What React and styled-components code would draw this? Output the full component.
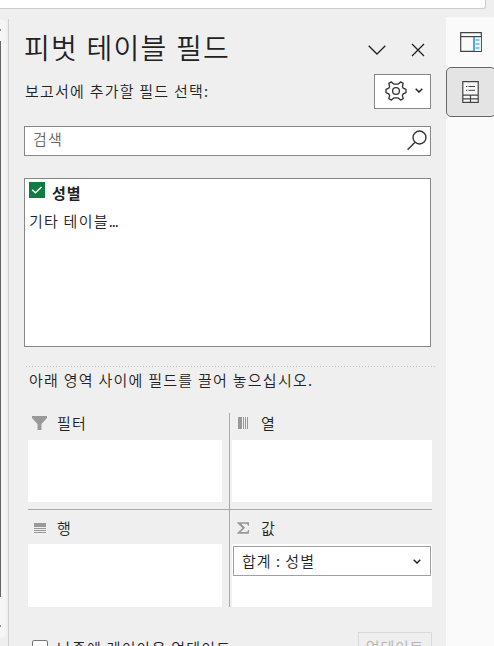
import { useState } from "react";
import styled, { createGlobalStyle } from "styled-components";

const GlobalStyle = createGlobalStyle`
  * {
    box-sizing: border-box;
  }
  body {
    margin: 0;
    overflow: hidden;
    background: #efefef;
    color: #222222;
    font-family: "Noto Sans CJK KR", "Noto Sans", sans-serif;
    font-size: 15px;
    font-weight: 350;
    letter-spacing: 1.22px;
  }
  svg {
    display: block;
    flex: none;
  }
`;

const ChevronIcon = ({ width, height, stroke = 1.3 }) => (
  <svg width={width} height={height} fill="none" stroke="#222">
    <path
      d={`M.7 .8L${width / 2} ${height - 1}L${width - 0.7} .8`}
      strokeWidth={stroke}
    />
  </svg>
);

const CloseIcon = () => (
  <svg width="14" height="14" fill="none" stroke="#222" strokeWidth="1.3">
    <path d="M1 1L13 13M13 1L1 13" />
  </svg>
);

const GearIcon = () => (
  <svg width="22" height="20" fill="none" stroke="#333" strokeWidth="1.3">
    <path
      d="M6.4 .9L8.8 3.1H13.2L15.6 .9L18.2 2.4L17.4 5.6L18.2 7.1L21 8.3V11.7L18.2 12.9L17.4 14.4L18.2 17.6L15.6 19.1L13.2 16.9H8.8L6.4 19.1L3.8 17.6L4.6 14.4L3.8 12.9L1 11.7V8.3L3.8 7.1L4.6 5.6L3.8 2.4Z"
      strokeLinejoin="round"
    />
    <circle cx="11" cy="10" r="3.4" />
  </svg>
);

const SearchIcon = () => (
  <svg width="20" height="21" fill="none" stroke="#333" strokeWidth="1.4">
    <circle cx="12.5" cy="7.5" r="6.5" />
    <path d="M8 12.2L.6 19.8" />
  </svg>
);

const FilterIcon = () => (
  <svg width="15" height="15" fill="#999">
    <path d="M0 0H15V2L9.5 8V14H5.5V8L0 2Z" />
  </svg>
);

const ColumnsIcon = () => (
  <svg width="11" height="12" fill="#999" shapeRendering="crispEdges">
    <path d="M0 0h4v12H0zM5 0h1v12H5zM7 0h1v12H7zM9 0h1v12H9z" />
  </svg>
);

const RowsIcon = () => (
  <svg width="12" height="10" fill="#999" shapeRendering="crispEdges">
    <path d="M0 0h12v4H0zM0 5h12v1H0zM0 7h12v1H0zM0 9h12v1H0z" />
  </svg>
);

const SigmaIcon = () => (
  <svg width="13" height="12" fill="#999">
    <path d="M.3 .3H12V3.8H11.2Q10.8 1.8 8.5 1.7H4.2L8.1 5.7L3.7 10H8.8Q11 9.9 11.4 7.9H12.2L11.8 11.7H.3V11L5.4 6.1L.3 1Z" />
  </svg>
);

const FieldPaneIcon = () => (
  <svg width="22" height="20" fill="none" stroke="#444" strokeWidth="1.2">
    <path d="M.7 .7H21.3V19.3H.7Z" fill="#fafafa" />
    <path d="M14 5h7v14h-7z" fill="#eaf5fc" stroke="none" />
    <path d="M.7 4.6H21.3" />
    <path d="M14 5V19" stroke="#2a95d5" strokeWidth="1.6" />
    <path d="M15.5 8H19.5M15.5 12H19.5M15.5 16H19.5" stroke="#2a95d5" />
  </svg>
);

const PivotPaneIcon = () => (
  <svg width="17" height="22" fill="none" stroke="#444" strokeWidth="1.2">
    <path d="M.8 .7H16.2V21.3H.8Z" fill="#fafafa" />
    <path d="M4 5.5H5.3M6.5 5.5H13M4 9.3H5.3M6.5 9.3H13" strokeWidth="1" />
    <path d="M.8 14.2H16.2M.8 17.8H16.2M8.5 14.2V21.3" />
  </svg>
);

const AREAS = [
  { id: "filters", label: "필터", Icon: FilterIcon },
  { id: "columns", label: "열", Icon: ColumnsIcon },
  { id: "rows", label: "행", Icon: RowsIcon },
  { id: "values", label: "값", Icon: SigmaIcon, items: ["합계 : 성별"] },
];

const App = () => {
  const [checked, setChecked] = useState(true);
  const [search, setSearch] = useState("");

  return (
    <>
      <GlobalStyle />
      <Screen>
        <SheetEdge />
        <Body>
          <Gutter>
            <ScrollTrack>
              <ScrollTip />
              <ScrollThumb />
              <ScrollTip />
            </ScrollTrack>
          </Gutter>
          <Pane>
            <Header>
              <Title>피벗 테이블 필드</Title>
              <HeaderActions>
                <ChevronIcon width={18} height={10} />
                <CloseIcon />
              </HeaderActions>
            </Header>
            <Toolbar>
              <ToolbarLabel>보고서에 추가할 필드 선택:</ToolbarLabel>
              <SettingsButton>
                <GearIcon />
                <ChevronIcon width={8} height={5} stroke={1.5} />
              </SettingsButton>
            </Toolbar>
            <SearchBox>
              <SearchInput
                placeholder="검색"
                value={search}
                onChange={(event) => setSearch(event.target.value)}
              />
              <SearchIcon />
            </SearchBox>
            <FieldList>
              <Field onClick={() => setChecked(!checked)}>
                <CheckMark $checked={checked}>
                  <svg width="16" height="16" fill="none" stroke="#fff">
                    <path d="M3.2 7.8L6.4 10.7L12.5 5" strokeWidth="1.5" />
                  </svg>
                </CheckMark>
                <FieldName>성별</FieldName>
              </Field>
              <MoreTables>
                기타 테이블<Dots>...</Dots>
              </MoreTables>
            </FieldList>
            <Divider />
            <Hint>아래 영역 사이에 필드를 끌어 놓으십시오.</Hint>
            <Areas>
              {AREAS.map(({ id, label, Icon, items = [] }, i) => (
                <Area key={id} $right={i % 2 === 1} $bottom={i > 1}>
                  <AreaLabel $bottom={i > 1}>
                    <IconSlot>
                      <Icon />
                    </IconSlot>
                    {label}
                  </AreaLabel>
                  <DropZone $bottom={i > 1}>
                    {items.map((item) => (
                      <ValueField key={item}>
                        <ValueName>{item}</ValueName>
                        <ChevronIcon width={8} height={5} stroke={1.5} />
                      </ValueField>
                    ))}
                  </DropZone>
                </Area>
              ))}
            </Areas>
            <Footer>
              <Defer>
                <EmptyCheck />
                나중에 레이아웃 업데이트
              </Defer>
              <UpdateButton disabled>업데이트</UpdateButton>
            </Footer>
          </Pane>
          <Rail>
            <RailButton>
              <FieldPaneIcon />
            </RailButton>
            <RailButton $active>
              <PivotPaneIcon />
            </RailButton>
          </Rail>
        </Body>
      </Screen>
    </>
  );
};

const Screen = styled.div`
  display: flex;
  flex-direction: column;
  width: 494px;
  height: 646px;
  overflow: hidden;
`;

const SheetEdge = styled.div`
  flex: none;
  width: 486px;
  height: 9px;
  background: #ffffff;
  border: solid #cccccc;
  border-width: 0 1px 1px 0;
  border-bottom-right-radius: 3px;
`;

const Body = styled.div`
  display: flex;
  flex: 1;
  min-height: 0;
`;

const Gutter = styled.div`
  flex: none;
  width: 9px;
  margin-top: 10px;
  border-right: 1px solid #cfcfcf;
`;

const ScrollTrack = styled.div`
  display: flex;
  flex-direction: column;
  justify-content: space-between;
  width: 6px;
  height: 619px;
  padding: 10px 0 11px;
  background: #f6f6f6;
  border-radius: 0 6px 6px 0;
`;

const ScrollTip = styled.div`
  width: 1px;
  height: 2px;
  background: #888888;
`;

const ScrollThumb = styled.div`
  width: 1px;
  height: 556px;
  margin-bottom: 18px;
  background: #666666;
`;

const Pane = styled.div`
  flex: none;
  width: 437px;
  padding: 18px 11px 0 15px;
`;

const Header = styled.div`
  display: flex;
  align-items: center;
  justify-content: space-between;
  height: 40px;
  padding-right: 10px;
`;

const Title = styled.h1`
  margin: 0;
  font-size: 28px;
  font-weight: 350;
  line-height: 40px;
  letter-spacing: 1.25px;
  word-spacing: 1px;
`;

const HeaderActions = styled.div`
  display: flex;
  align-items: center;
  gap: 25px;
  padding-top: 5px;
`;

const Toolbar = styled.div`
  display: flex;
  align-items: center;
  justify-content: space-between;
  height: 35px;
  margin: 7px 4px 0 1px;
`;

const ToolbarLabel = styled.span`
  padding-bottom: 2px;
`;

const SettingsButton = styled.button`
  display: flex;
  align-items: center;
  justify-content: space-between;
  width: 57px;
  height: 35px;
  padding: 0 7px 2px 10px;
  background: #ffffff;
  border: 1px solid #888888;
`;

const SearchBox = styled.div`
  display: flex;
  align-items: center;
  width: 407px;
  height: 30px;
  margin-top: 17px;
  padding: 0 3px 1px 8px;
  background: #ffffff;
  border: 1px solid #888888;
`;

const SearchInput = styled.input`
  flex: 1;
  min-width: 0;
  height: 22px;
  margin-bottom: 4px;
  padding: 0;
  background: transparent;
  border: none;
  outline: none;
  font: inherit;
  letter-spacing: inherit;
  &::placeholder {
    color: #666666;
  }
`;

const FieldList = styled.div`
  width: 407px;
  height: 169px;
  margin-top: 22px;
  padding: 3px 4px;
  background: #ffffff;
  border: 1px solid #888888;
`;

const Field = styled.div`
  display: flex;
  gap: 7px;
  height: 24px;
`;

const CheckMark = styled.div`
  width: 16px;
  height: 16px;
  background: ${(props) => (props.$checked ? "#107c41" : "#ffffff")};
`;

const FieldName = styled.span`
  font-weight: 700;
  line-height: 21px;
  letter-spacing: 0.9px;
`;

const MoreTables = styled.div`
  margin-top: 4px;
  line-height: 22px;
`;

const Dots = styled.span`
  letter-spacing: -1px;
`;

const Divider = styled.div`
  width: 410px;
  height: 1px;
  margin: 19px 0 0 2px;
  background: repeating-linear-gradient(
    to right,
    #c3c3c3 0 1px,
    transparent 1px 3px
  );
`;

const Hint = styled.div`
  margin: 2px 0 0 5px;
  line-height: 22px;
  letter-spacing: 1.26px;
`;

const Areas = styled.div`
  display: grid;
  grid-template-columns: 202px 202px;
  grid-template-rows: 97px 97px;
  width: 404px;
  margin: 22px 0 0 4px;
`;

const Area = styled.div`
  display: flex;
  flex-direction: column;
  padding: ${(props) => (props.$right ? "0 0 0 2px" : "0 7px 0 0")};
  padding-bottom: ${(props) => (props.$bottom ? 0 : 7)}px;
  border-right: ${(props) => (props.$right ? "none" : "1px solid #a9a9a9")};
  border-bottom: ${(props) => (props.$bottom ? "none" : "1px solid #a9a9a9")};
`;

const AreaLabel = styled.div`
  display: flex;
  flex: 1;
  align-items: center;
  padding: ${(props) => (props.$bottom ? "2px 0 0 4px" : "0 0 7px 4px")};
  line-height: 20px;
`;

const IconSlot = styled.span`
  display: flex;
  justify-content: center;
  width: 15px;
  margin-right: 10px;
`;

const DropZone = styled.div`
  flex: none;
  height: ${(props) => (props.$bottom ? 63 : 62)}px;
  padding: 2px 1px;
  background: #ffffff;
`;

const ValueField = styled.div`
  display: flex;
  align-items: center;
  justify-content: space-between;
  height: 30px;
  padding: 0 9px 0 8px;
  border: 1px solid #a0a0a0;
  letter-spacing: 1px;
`;

const ValueName = styled.span`
  padding-bottom: 2px;
`;

const Footer = styled.div`
  display: flex;
  justify-content: space-between;
  margin: 25px 3px 0 8px;
`;

const Defer = styled.div`
  display: flex;
  gap: 9px;
  padding-top: 5px;
  line-height: 22px;
`;

const EmptyCheck = styled.div`
  width: 16px;
  height: 16px;
  margin-top: 3px;
  background: #ffffff;
  border: 1px solid #777777;
  border-radius: 2px;
`;

const UpdateButton = styled.button`
  width: 74px;
  height: 30px;
  padding: 0;
  background: none;
  border: 1px solid #dadada;
  color: #b5b5b5;
  font: inherit;
  letter-spacing: 0.8px;
  line-height: 28px;
`;

const Rail = styled.div`
  flex: none;
  width: 48px;
  margin-top: 8px;
  background: #fafafa;
`;

const RailButton = styled.div`
  display: flex;
  align-items: center;
  justify-content: center;
  width: 50px;
  height: 50px;
  padding-right: 1px;
  background: ${(props) => (props.$active ? "#e4e4e4" : "transparent")};
  border: 1px solid ${(props) => (props.$active ? "#666666" : "transparent")};
  border-radius: 5px;
`;

export default App;
